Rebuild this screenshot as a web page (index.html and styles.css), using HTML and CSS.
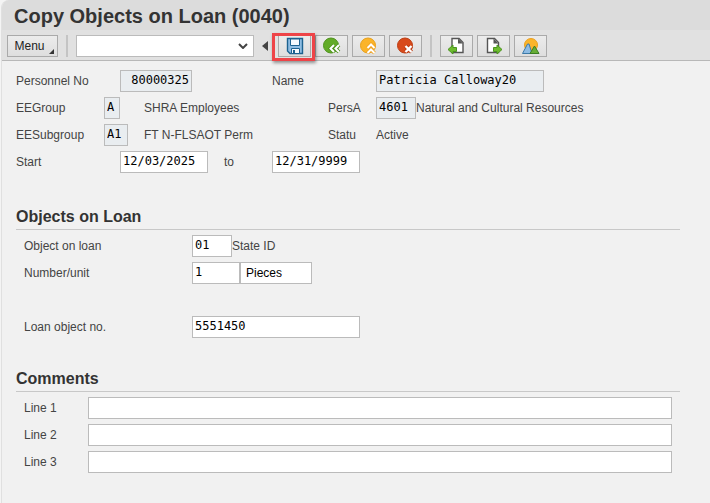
FILE: index.html
```html
<!DOCTYPE html>
<html lang="en">
<head>
    <meta charset="UTF-8">
    <meta name="viewport" content="width=device-width, initial-scale=1.0">
    <title>Copy Objects on Loan (0040)</title>
    <link rel="stylesheet" href="styles.css">
</head>
<body>
    <div class="window">
        <header class="header">
            <h1>Copy Objects on Loan (0040)</h1>
            <div class="toolbar">
                <button type="button" class="menu-btn">Menu</button>
                <span class="separator"></span>
                <div class="command">
                    <select aria-label="Command"><option></option></select>
                    <svg class="chevron" viewBox="0 0 10 6"><path d="M1 1l4 4 4-4" fill="none" stroke="#444" stroke-width="2"/></svg>
                </div>
                <svg class="collapse" viewBox="0 0 8 10"><path d="M6 0v10L0 5z" fill="#444"/></svg>
                <div class="tools">
                    <div class="highlight">
                        <button type="button" class="tool-btn" aria-label="Save">
                            <svg viewBox="0 0 20 20">
                                <path d="M2.500 2.500h15v15H5l-2.500-2.500z" fill="#8fbde2" stroke="#1d6290" stroke-width="1.400"/>
                                <path d="M5.500 3h9v6.500h-9z" fill="#f4f9fd" stroke="#1d6290"/>
                                <path d="M6.500 12.500h8v5h-8z" fill="#f4f9fd" stroke="#1d6290"/>
                                <path d="M8 14h2v3H8z" fill="#1d6290"/>
                            </svg>
                        </button>
                    </div>
                    <button type="button" class="tool-btn" aria-label="Back">
                        <svg viewBox="0 0 20 20">
                            <circle cx="9" cy="9.500" r="7.500" fill="#62ab27" stroke="#4f921c"/>
                            <path d="M12 9l-3.500 3.500L12 16M17 9l-3.500 3.500L17 16" fill="none" stroke="#4f921c" stroke-width="3.600"/>
                            <path d="M12 9l-3.500 3.500L12 16M17 9l-3.500 3.500L17 16" fill="none" stroke="#fff" stroke-width="2"/>
                        </svg>
                    </button>
                    <button type="button" class="tool-btn" aria-label="Exit">
                        <svg viewBox="0 0 20 20">
                            <circle cx="9" cy="9.500" r="7.500" fill="#fbb42a" stroke="#e8a01a"/>
                            <path d="M8.500 12l3.500-3.500 3.500 3.500M8.500 17l3.500-3.500 3.500 3.500" fill="none" stroke="#f0a01c" stroke-width="3.600"/>
                            <path d="M8.500 12l3.500-3.500 3.500 3.500M8.500 17l3.500-3.500 3.500 3.500" fill="none" stroke="#fff" stroke-width="2"/>
                        </svg>
                    </button>
                    <button type="button" class="tool-btn" aria-label="Cancel">
                        <svg viewBox="0 0 20 20">
                            <circle cx="9" cy="9.500" r="7.500" fill="#d84a1b" stroke="#bd3d13"/>
                            <path d="M9.500 10l6 6M15.500 10l-6 6" fill="none" stroke="#bd3d13" stroke-width="4"/>
                            <path d="M9.500 10l6 6M15.500 10l-6 6" fill="none" stroke="#fff" stroke-width="2.400"/>
                        </svg>
                    </button>
                </div>
                <span class="separator"></span>
                <div class="tools">
                    <button type="button" class="tool-btn" aria-label="Previous record">
                        <svg viewBox="0 0 20 20">
                            <path d="M5 2.500h7l4 4v10H5z" fill="#fff" stroke="#555" stroke-width="1.400"/>
                            <path d="M11 2.500v5h5z" fill="#555"/>
                            <path d="M1 13.500L6 9v2.500h3.500v4H6V18z" fill="#6dbb2e" stroke="#4b9420"/>
                        </svg>
                    </button>
                    <button type="button" class="tool-btn" aria-label="Next record">
                        <svg viewBox="0 0 20 20">
                            <path d="M3.500 2.500h7l4 4v10h-11z" fill="#fff" stroke="#555" stroke-width="1.400"/>
                            <path d="M9.500 2.500v5h5z" fill="#555"/>
                            <path d="M18 13.500L13 9v2.500H9.500v4H13V18z" fill="#6dbb2e" stroke="#4b9420"/>
                        </svg>
                    </button>
                    <button type="button" class="tool-btn" aria-label="Overview">
                        <svg viewBox="0 0 20 20">
                            <circle cx="10" cy="9" r="6.500" fill="#fbb42a" stroke="#eca11f"/>
                            <path d="M1.500 17.500L6.500 8h1.500l3 9.500z" fill="#8dbbe3" stroke="#3c79a8"/>
                            <path d="M9 17.500l4.500-7.500 4.500 7.500z" fill="#67ad35" stroke="#3a7d22"/>
                        </svg>
                    </button>
                </div>
            </div>
        </header>

        <main class="content">
            <form>
                <div class="employee">
                    <label class="c-label" for="pernr">Personnel No</label>
                    <input class="c-field w-72 right" id="pernr" value="80000325" readonly>
                    <label class="c-to2" for="name">Name</label>
                    <input class="c-value w-168" id="name" value="Patricia Calloway20" readonly>

                    <label class="c-label" for="group">EEGroup</label>
                    <input class="c-code w-16" id="group" value="A" readonly>
                    <span class="c-text">SHRA Employees</span>
                    <label class="c-area" for="area">PersA</label>
                    <div class="c-value pair">
                        <input class="w-40" id="area" value="4601" readonly>
                        <span>Natural and Cultural Resources</span>
                    </div>

                    <label class="c-label" for="subgroup">EESubgroup</label>
                    <input class="c-code w-24" id="subgroup" value="A1" readonly>
                    <span class="c-text">FT N-FLSAOT Perm</span>
                    <span class="c-area">Statu</span>
                    <span class="c-value">Active</span>

                    <label class="c-label" for="start">Start</label>
                    <input class="c-field w-88" id="start" value="12/03/2025">
                    <label class="c-to" for="end">to</label>
                    <input class="c-to2 w-88" id="end" value="12/31/9999">
                </div>

                <section class="objects">
                    <h2>Objects on Loan</h2>
                    <div class="row">
                        <label for="object">Object on loan</label>
                        <input class="w-40" id="object" value="01">
                        <span>State ID</span>
                    </div>
                    <div class="row">
                        <label for="number">Number/unit</label>
                        <input class="w-48" id="number" value="1">
                        <input class="w-72 unit" aria-label="Unit" value="Pieces">
                    </div>
                    <div class="row"></div>
                    <div class="row">
                        <label for="loanno">Loan object no.</label>
                        <input class="w-168" id="loanno" value="5551450">
                    </div>
                </section>

                <section class="comments">
                    <h2>Comments</h2>
                    <div class="row">
                        <label for="line1">Line 1</label>
                        <input id="line1">
                    </div>
                    <div class="row">
                        <label for="line2">Line 2</label>
                        <input id="line2">
                    </div>
                    <div class="row">
                        <label for="line3">Line 3</label>
                        <input id="line3">
                    </div>
                </section>
            </form>
        </main>
    </div>
</body>
</html>
```
FILE: styles.css
```css
* {
    box-sizing: border-box;
}

body {
    margin: 0;
    background-color: #f4f4f4;
    color: #444;
    font-family: "Liberation Sans", Arial, sans-serif;
    font-size: 12px;
}

.window {
    min-height: 100vh;
    margin-left: 1px;
    border-left: 1px solid #e0e0e0;
    border-top-left-radius: 8px;
    background-color: #f1f1f1;
    overflow: hidden;
}

.header {
    padding: 4px 5px 3px;
    border-bottom: 1px solid #b8b8b8;
    background: linear-gradient(#dcdcdc 50%, #e1e1e1 50%);
}

h1 {
    margin: 0 0 7px 7px;
    color: #333;
    font-size: 20px;
    line-height: 24px;
}

h2 {
    margin: 0 0 5px;
    padding-bottom: 2px;
    border-bottom: 1px solid #c8c8c8;
    color: #333;
    font-size: 16px;
    line-height: 20px;
}

.toolbar {
    display: flex;
    align-items: center;
    height: 22px;
    gap: 8px;
}

.tools {
    display: flex;
    gap: 4px;
}

.separator {
    width: 2px;
    height: 22px;
    background-color: #c4c4c4;
}

button {
    height: 22px;
    padding: 0;
    border: 1px solid #aaa;
    border-radius: 0;
    background: linear-gradient(#ececec, #dedede);
    font-family: inherit;
}

.menu-btn {
    position: relative;
    width: 51px;
    padding-right: 6px;
    color: #222;
    font-size: 12px;
}

.menu-btn::after {
    content: "";
    position: absolute;
    right: 3px;
    bottom: 2px;
    border-left: 5px solid transparent;
    border-bottom: 5px solid #333;
}

.command {
    position: relative;
    display: flex;
}

.command select {
    width: 178px;
    height: 22px;
    border: 1px solid #bbb;
    border-radius: 0;
    background-color: #fff;
    appearance: none;
}

.chevron {
    position: absolute;
    top: 8px;
    right: 6px;
    width: 10px;
    height: 6px;
    pointer-events: none;
}

.collapse {
    width: 8px;
    height: 10px;
}

.tool-btn {
    display: flex;
    align-items: center;
    justify-content: center;
    width: 33px;
}

.tool-btn svg {
    width: 20px;
    height: 20px;
}

.highlight {
    position: relative;
}

.highlight::after {
    content: "";
    position: absolute;
    inset: -2px -4px -4px -6px;
    border: 3px solid #ee4448;
    box-shadow: 1px 2px 3px rgba(0, 0, 0, 0.4);
    pointer-events: none;
}

.content {
    padding: 9px 30px 24px 14px;
}

input {
    height: 22px;
    padding: 0 2px 2px;
    border: 1px solid #bbb;
    border-radius: 0;
    background-color: #fff;
    color: #000;
    font-family: "DejaVu Sans Mono", monospace;
    font-size: 12px;
}

input:read-only {
    background-color: #e9edf0;
}

/* all screen fields sit on an 8px character grid */
.employee {
    display: grid;
    grid-template-columns: 88px 16px 24px 80px 48px 56px 48px 1fr;
    grid-auto-rows: 22px;
    row-gap: 5px;
    align-items: center;
    white-space: nowrap;
}

.c-label { grid-column: 1; }
.c-code { grid-column: 2 / span 2; }
.c-field { grid-column: 3 / span 2; }
.c-text { grid-column: 4 / span 3; }
.c-to { grid-column: 5; }
.c-to2 { grid-column: 6 / span 2; }
.c-area { grid-column: 7; }
.c-value { grid-column: 8; }

.w-16 { width: 16px; }
.w-24 { width: 24px; }
.w-40 { width: 40px; }
.w-48 { width: 48px; }
.w-72 { width: 72px; }
.w-88 { width: 88px; }
.w-168 { width: 168px; }

.right {
    text-align: right;
}

.pair {
    display: flex;
    align-items: center;
}

.unit {
    padding: 0 5px;
    font-family: inherit;
}

section {
    display: flex;
    flex-direction: column;
}

.objects {
    margin-top: 34px;
}

.comments {
    margin-top: 26px;
}

.row {
    display: flex;
    align-items: center;
    height: 22px;
    margin-bottom: 5px;
    padding: 0 8px;
}

.objects label {
    width: 168px;
}

.comments label {
    width: 64px;
}

.comments input {
    flex: 1;
}
```
